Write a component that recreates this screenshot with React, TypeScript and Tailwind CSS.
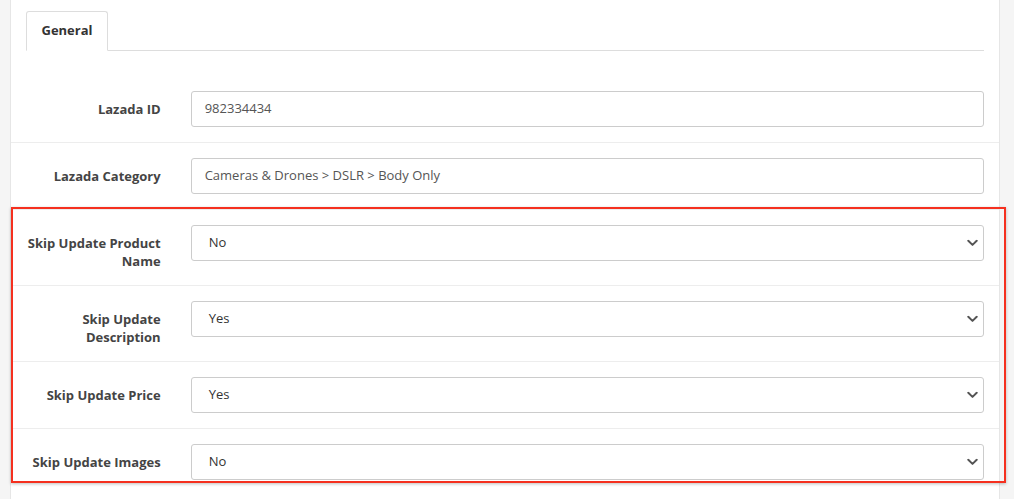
import React from 'react';

type Row = { label: string; value: string; kind: 'input' | 'select' };

const rows: Row[] = [
    { label: 'Lazada ID', value: '982334434', kind: 'input' },
    { label: 'Lazada Category', value: 'Cameras & Drones > DSLR > Body Only', kind: 'input' },
    { label: 'Skip Update Product Name', value: 'No', kind: 'select' },
    { label: 'Skip Update Description', value: 'Yes', kind: 'select' },
    { label: 'Skip Update Price', value: 'Yes', kind: 'select' },
    { label: 'Skip Update Images', value: 'No', kind: 'select' },
];

const Chevron: React.FC = () => (
    <svg width="11" height="7" viewBox="0 0 11 7" className="absolute right-[5px] top-1/2 -translate-y-1/2 pointer-events-none">
        <path d="M1.3 1.3 L5.5 5.4 L9.7 1.3" fill="none" stroke="#555" strokeWidth="2" strokeLinecap="round" strokeLinejoin="round" />
    </svg>
);

/**
 * Product edit panel with the Lazada "General" tab.
 */
export default function App() {
    return (
        <div className="relative w-[1014px] h-[499px] overflow-hidden bg-[#f5f5f5] font-['Open_Sans',sans-serif]">
            <div className="ml-[10px] w-[990px] h-full bg-white border-x border-[#e6e6e6] px-[15px] pt-[11px]">

                {/* Tabs */}
                <ul className="flex border-b border-[#ddd]">
                    <li className="-mb-px h-[40px] w-[82px] flex items-center justify-center bg-white border border-[#ddd] border-b-white rounded-t-[3px] text-[13px] font-bold text-[#333]">
                        General
                    </li>
                </ul>

                {/* Form rows */}
                <div className="mt-[25px] -mx-[15px]">
                    {rows.map((row, i) => (
                        <div
                            key={row.label}
                            className={`grid grid-cols-6 py-[15px] ${i > 0 ? 'border-t border-[#ededed]' : ''}`}
                        >
                            <label className="col-span-1 px-[15px] pt-[9px] text-right text-[13px] leading-[18px] font-bold text-[#444]">
                                {row.label}
                            </label>
                            <div className="col-span-5 px-[15px]">
                                {row.kind === 'input' ? (
                                    <div className="h-[36px] px-[13px] flex items-center border border-[#ccc] rounded-[3px] text-[13px] text-[#555]">
                                        {row.value}
                                    </div>
                                ) : (
                                    <div className="relative h-[36px] pl-[17px] flex items-center border border-[#ccc] rounded-[3px] text-[13px] text-[#333]">
                                        {row.value}
                                        <Chevron />
                                    </div>
                                )}
                            </div>
                        </div>
                    ))}
                </div>
            </div>

            {/* Red annotation box */}
            <div className="absolute left-[11px] top-[207px] w-[995px] h-[276px] border-2 border-[#f5301f] shadow-[0_1px_3px_rgba(0,0,0,0.25)] pointer-events-none" />
        </div>
    );
}
